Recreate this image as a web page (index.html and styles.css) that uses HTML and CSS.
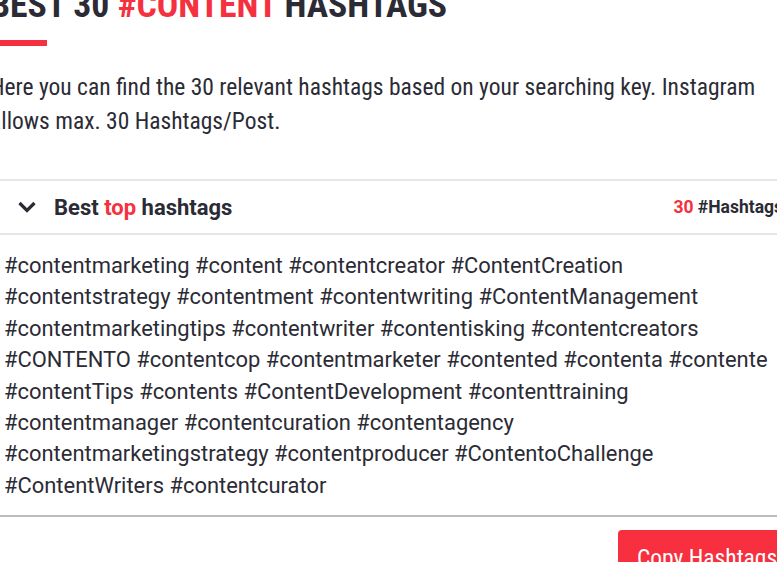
FILE: index.html
```html
<!DOCTYPE html>
<html>
<head>
<meta charset="utf-8">
<link rel="stylesheet" href="styles.css">
</head>
<body>
<div class="page">
  <h1 class="title">BEST 30 <span class="red">#CONTENT</span> HASHTAGS</h1>
  <div class="bar"></div>
  <p class="intro">Here you can find the 30 relevant hashtags based on your searching key. Instagram allows max. 30 Hashtags/Post.</p>
  <div class="card">
    <div class="card-head">
      <svg class="chev" width="20" height="14" viewBox="0 0 20 14"><path d="M2.5 3 L10 10.5 L17.5 3" fill="none" stroke="#2b2b33" stroke-width="3.2"/></svg>
      <span class="head-title">Best <span class="red">top</span> hashtags</span>
      <span class="count"><span class="red">30</span> #Hashtags</span>
    </div>
    <div class="tags">#contentmarketing #content #contentcreator #ContentCreation<br>#contentstrategy #contentment #contentwriting #ContentManagement<br>#contentmarketingtips #contentwriter #contentisking #contentcreators<br>#CONTENTO #contentcop #contentmarketer #contented #contenta #contente<br>#contentTips #contents #ContentDevelopment #contenttraining<br>#contentmanager #contentcuration #contentagency<br>#contentmarketingstrategy #contentproducer #ContentoChallenge<br>#ContentWriters #contentcurator</div>
  </div>
  <div class="actions">
    <button class="copy">Copy Hashtags</button>
  </div>
</div>
</body>
</html>
```
FILE: styles.css
```css
html, body {
  margin: 0;
  padding: 0;
  background: #fff;
  overflow: hidden;
}
.page {
  margin-left: -10px;
  margin-top: -15px;
  width: 900px;
  color: #2b2b35;
  font-family: "Roboto Condensed", Roboto, sans-serif;
}
.red { color: #f5303f; }
.title {
  margin: 0;
  font-size: 35.7px;
  font-weight: 700;
  line-height: 40px;
  font-family: "Roboto Condensed", Roboto, sans-serif;
}
.bar {
  margin-top: 15px;
  width: 57px;
  height: 6px;
  background: #f5303f;
}
.intro {
  margin: 24px 0 0 0;
  width: 790px;
  font-size: 23.5px;
  line-height: 34px;
  color: #2b2b35;
}
.card {
  margin-top: 41px;
  border-top: 2px solid #e6e6e6;
  border-bottom: 2px solid #bdbdbd;
  font-family: Roboto, sans-serif;
}
.card-head {
  display: flex;
  align-items: center;
  height: 52px;
  border-bottom: 2px solid #e6e6e6;
  padding-left: 27px;
}
.chev { margin-right: 17px; }
.head-title {
  font-weight: 700;
  font-size: 22px;
}
.count {
  margin-left: auto;
  margin-right: 107px;
  font-weight: 700;
  font-size: 17.5px;
}
.tags {
  padding: 15px 0 14px 14px;
  font-size: 21.93px;
  line-height: 31.4px;
  color: #2b2b35;
}
.actions {
  display: flex;
  padding-top: 13px;
  padding-left: 628px;
}
.copy {
  border: none;
  background: #f72f3f;
  color: #fff;
  border-radius: 4px;
  font-family: "Roboto Condensed", Roboto, sans-serif;
  font-size: 23.5px;
  padding: 14px 18px 12px 19px;
}
```
